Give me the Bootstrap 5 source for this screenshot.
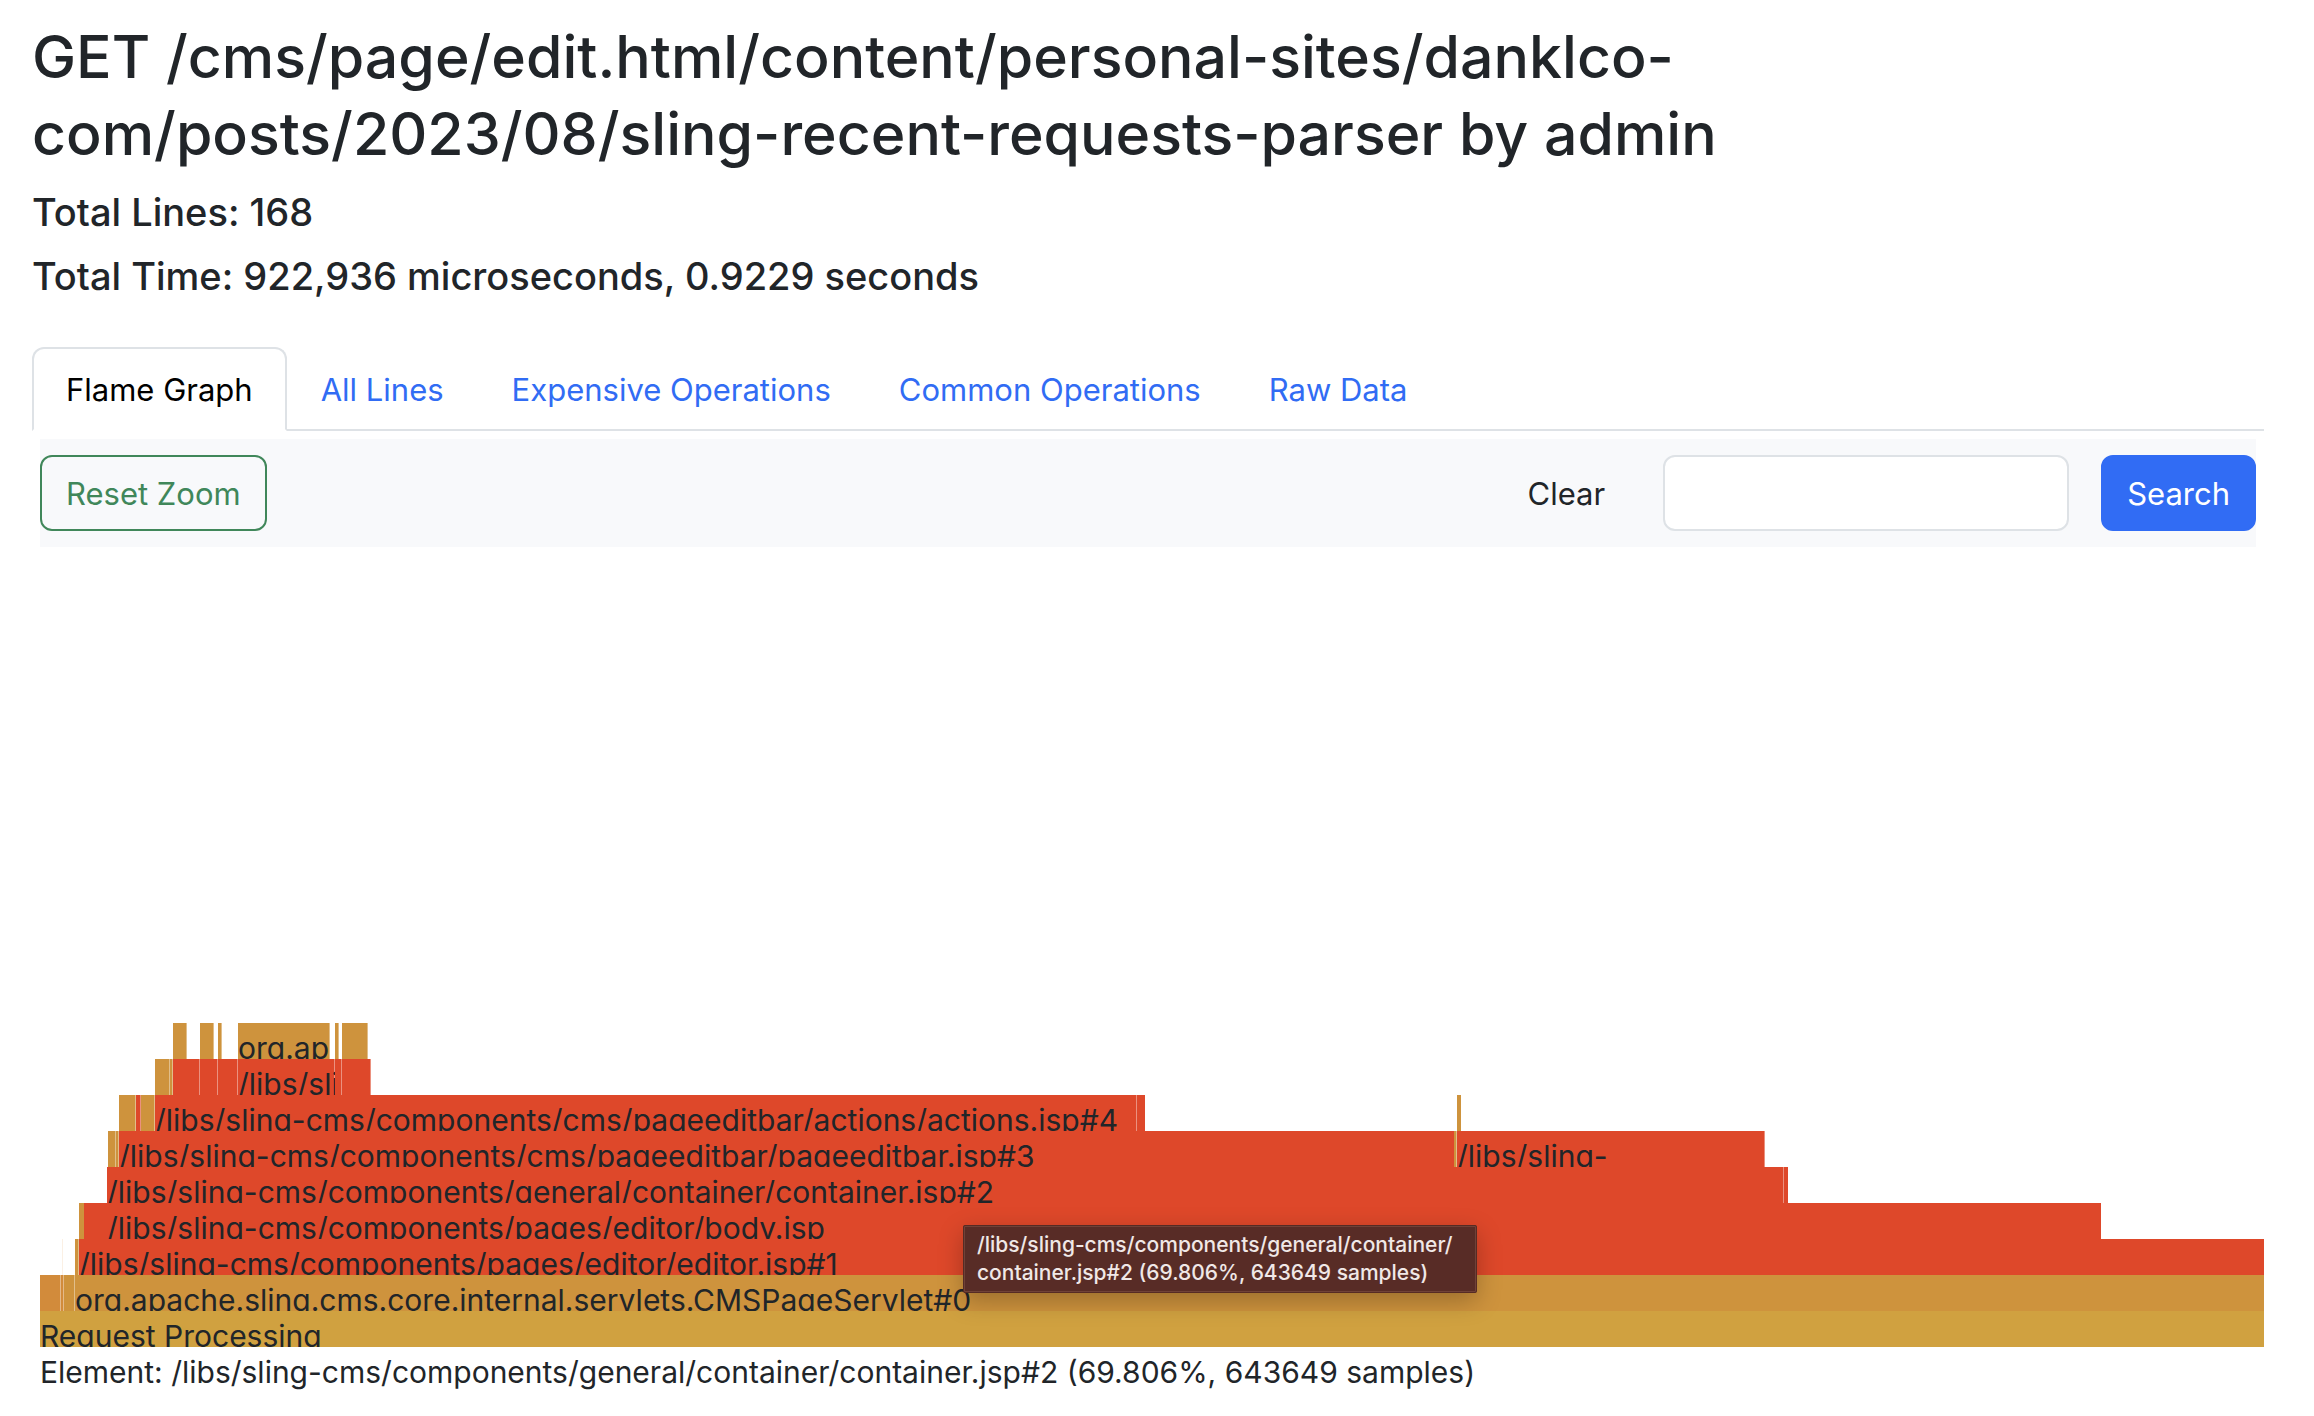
<!DOCTYPE html>
<html lang="en">
<head>
<meta charset="utf-8">
<meta name="viewport" content="width=device-width, initial-scale=1">
<title>Request flame graph</title>
<link href="https://cdn.jsdelivr.net/npm/bootstrap@5.3.0/dist/css/bootstrap.min.css" rel="stylesheet">
<style>
  :root { --ui-font: Inter, "Liberation Sans", sans-serif; }
  body { font-family: var(--ui-font); font-size: 31px; line-height: 48px; color: #212529; }
  .page-body { padding: 18px 50px 16px 32px; }
  .request-title { font-size: 59px; line-height: 77px; max-width: 1800px; margin-bottom: 16px; }
  .request-stat { font-size: 38px; line-height: 48px; margin-bottom: 16px; }
  .request-tabs { margin-top: 47px; border-bottom: 2px solid #dee2e6; }
  .request-tabs .nav-link { padding: 17px 32px 15px; border-width: 2px; border-radius: 12px 12px 0 0; margin-bottom: -2px; color: #316cf4; line-height: 48px; }
  .request-tabs .nav-link.active { color: #000; }
  .graph-pane { padding: 8px 0 0 8px; }
  .graph-tools { background: #f8f9fb; padding: 16px 0; gap: 32px; margin-right: 8px; }
  .graph-tools .btn { font-size: 31px; line-height: 48px; padding: 13px 24px 11px; border-width: 2px; border-radius: 12px; }
  .graph-tools .btn-outline-success { color: #40875a; border-color: #40875a; }
  .graph-tools .btn-primary { background: #316cf4; border-color: #316cf4; }
  .graph-tools .form-control { width: 406px; height: 76px; border: 2px solid #dee2e6; border-radius: 12px; font-size: 31px; }
  .flame { height: 800px; }
  .flame-row { height: 36px; }
  .fr { flex: 1 1 0; min-width: 0; overflow: hidden; white-space: nowrap; }
  .fr, .flame-detail { font-size: 30px; line-height: 50px; }
  .fr-label { display: block; width: 0; }
  .fr-root { background: #d0a140; }
  .fr-java { background: #ce933d; }
  .fr-filter { background: #d28b3b; }
  .fr-jsp { background: #de482a; }
  .fr-faint { background: #fbf0e4; }
  .seam { box-shadow: inset -1px 0 rgba(255, 255, 255, .4); }
  .flame-tip { left: 41.5%; bottom: 54px; min-width: 514px; padding: 4px 12px; border: 2px solid #704238; outline: 1px solid rgba(60, 20, 15, .5); outline-offset: -1px; background: #582c26; color: #f0e8e7; font-size: 21px; font-weight: 500; line-height: 28px; box-shadow: 0 8px 24px rgba(0, 0, 0, .25); border-radius: 2px; }
</style>
</head>
<body>
<main class="page-body">
  <h2 class="request-title">GET /cms/page/edit.html/content/personal-sites/danklco-<wbr>com/posts/2023/08/sling-recent-requests-parser by admin</h2>
  <h5 class="request-stat">Total Lines: 168</h5>
  <h5 class="request-stat">Total Time: 922,936 microseconds, 0.9229 seconds</h5>

  <ul class="nav nav-tabs request-tabs">
    <li class="nav-item"><a class="nav-link active" aria-current="page" href="#flame">Flame Graph</a></li>
    <li class="nav-item"><a class="nav-link" href="#lines">All Lines</a></li>
    <li class="nav-item"><a class="nav-link" href="#expensive">Expensive Operations</a></li>
    <li class="nav-item"><a class="nav-link" href="#common">Common Operations</a></li>
    <li class="nav-item"><a class="nav-link" href="#raw">Raw Data</a></li>
  </ul>

  <section class="graph-pane" id="flame">
    <form class="graph-tools d-flex align-items-center">
      <button type="button" class="btn btn-outline-success me-auto">Reset Zoom</button>
      <button type="button" class="btn">Clear</button>
      <input type="text" class="form-control" aria-label="Search term">
      <button type="button" class="btn btn-primary">Search</button>
    </form>

    <!-- Deepest frames on top; flex-grow is each frame's share of the total time -->
    <div class="flame position-relative d-flex flex-column justify-content-end">
      <div class="flame-row d-flex">
        <div class="fr" style="flex-grow:133"></div>
        <div class="fr fr-java seam" style="flex-grow:14"></div>
        <div class="fr" style="flex-grow:13"></div>
        <div class="fr fr-java seam" style="flex-grow:14"></div>
        <div class="fr" style="flex-grow:4"></div>
        <div class="fr fr-java seam" style="flex-grow:4"></div>
        <div class="fr" style="flex-grow:16"></div>
        <div class="fr fr-java seam" style="flex-grow:92"><span class="fr-label">org.ap</span></div>
        <div class="fr" style="flex-grow:5"></div>
        <div class="fr fr-java seam" style="flex-grow:4"></div>
        <div class="fr" style="flex-grow:3"></div>
        <div class="fr fr-java seam" style="flex-grow:26"></div>
        <div class="fr" style="flex-grow:1896"></div>
      </div>
      <div class="flame-row d-flex">
        <div class="fr" style="flex-grow:115"></div>
        <div class="fr fr-java seam" style="flex-grow:15"></div>
        <div class="fr fr-java seam" style="flex-grow:3"></div>
        <div class="fr fr-jsp seam" style="flex-grow:27"></div>
        <div class="fr fr-jsp seam" style="flex-grow:18"></div>
        <div class="fr fr-jsp seam" style="flex-grow:20"></div>
        <div class="fr fr-jsp seam" style="flex-grow:97"><span class="fr-label">/libs/sli</span></div>
        <div class="fr fr-jsp seam" style="flex-grow:7"></div>
        <div class="fr fr-jsp seam" style="flex-grow:29"></div>
        <div class="fr" style="flex-grow:1893"></div>
      </div>
      <div class="flame-row d-flex">
        <div class="fr" style="flex-grow:79"></div>
        <div class="fr fr-java seam" style="flex-grow:17"></div>
        <div class="fr fr-jsp seam" style="flex-grow:5"></div>
        <div class="fr fr-java seam" style="flex-grow:14"></div>
        <div class="fr fr-jsp seam" style="flex-grow:982"><span class="fr-label">/libs/sling-cms/components/cms/pageeditbar/actions/actions.jsp#4</span></div>
        <div class="fr fr-jsp" style="flex-grow:8"></div>
        <div class="fr" style="flex-grow:312"></div>
        <div class="fr fr-java" style="flex-grow:4"></div>
        <div class="fr" style="flex-grow:803"></div>
      </div>
      <div class="flame-row d-flex">
        <div class="fr" style="flex-grow:68"></div>
        <div class="fr fr-java seam" style="flex-grow:8"></div>
        <div class="fr fr-java seam" style="flex-grow:3"></div>
        <div class="fr fr-jsp" style="flex-grow:1335"><span class="fr-label">/libs/sling-cms/components/cms/pageeditbar/pageeditbar.jsp#3</span></div>
        <div class="fr fr-java seam" style="flex-grow:3"></div>
        <div class="fr fr-jsp seam" style="flex-grow:308"><span class="fr-label">/libs/sling-</span></div>
        <div class="fr" style="flex-grow:499"></div>
      </div>
      <div class="flame-row d-flex">
        <div class="fr" style="flex-grow:67"></div>
        <div class="fr fr-jsp seam" style="flex-grow:1677"><span class="fr-label">/libs/sling-cms/components/general/container/container.jsp#2</span></div>
        <div class="fr fr-jsp" style="flex-grow:4"></div>
        <div class="fr" style="flex-grow:476"></div>
      </div>
      <div class="flame-row d-flex">
        <div class="fr" style="flex-grow:39"></div>
        <div class="fr fr-java" style="flex-grow:5"></div>
        <div class="fr fr-jsp" style="flex-grow:23"></div>
        <div class="fr fr-jsp" style="flex-grow:1994"><span class="fr-label">/libs/sling-cms/components/pages/editor/body.jsp</span></div>
        <div class="fr" style="flex-grow:163"></div>
      </div>
      <div class="flame-row d-flex">
        <div class="fr" style="flex-grow:22"></div>
        <div class="fr fr-faint" style="flex-grow:1"></div>
        <div class="fr" style="flex-grow:12"></div>
        <div class="fr fr-java seam" style="flex-grow:4"></div>
        <div class="fr fr-jsp" style="flex-grow:2185"><span class="fr-label">/libs/sling-cms/components/pages/editor/editor.jsp#1</span></div>
      </div>
      <div class="flame-row d-flex">
        <div class="fr fr-filter seam" style="flex-grow:21"></div>
        <div class="fr fr-filter seam" style="flex-grow:3"></div>
        <div class="fr fr-java seam" style="flex-grow:11"></div>
        <div class="fr fr-java" style="flex-grow:2189"><span class="fr-label">org.apache.sling.cms.core.internal.servlets.CMSPageServlet#0</span></div>
      </div>
      <div class="flame-row d-flex">
        <div class="fr fr-root"><span class="fr-label">Request Processing</span></div>
      </div>
      <div class="flame-tip position-absolute" role="tooltip">/libs/sling-cms/components/general/container/<br>container.jsp#2 (69.806%, 643649 samples)</div>
    </div>
    <div class="flame-detail">Element: /libs/sling-cms/components/general/container/container.jsp#2 (69.806%, 643649 samples)</div>
  </section>
</main>
<script src="https://cdn.jsdelivr.net/npm/bootstrap@5.3.0/dist/js/bootstrap.bundle.min.js"></script>
</body>
</html>
